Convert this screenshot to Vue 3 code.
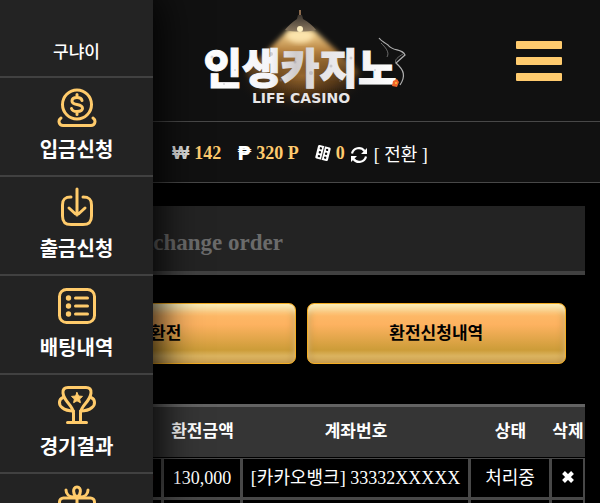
<script setup>
const columns = ['신청일시', '환전금액', '계좌번호', '상태', '삭제']

const orders = [
  { date: '2023-01-10 10:20', amount: '130,000', account: '[카카오뱅크] 33332XXXXX', state: '처리중' },
  { date: '2023-01-09 18:40', amount: '130,000', account: '[카카오뱅크] 33332XXXXX', state: '처리중' },
]

const menu = [
  { icon: 'deposit', label: '입금신청' },
  { icon: 'withdraw', label: '출금신청' },
  { icon: 'list', label: '배팅내역' },
  { icon: 'trophy', label: '경기결과' },
  { icon: 'gift', label: '이벤트' },
]
</script>

<template>
  <div class="app">
    <header class="top">
      <a class="brand" href="#" aria-label="인생카지노">
        <svg width="220" height="121" viewBox="0 0 220 121">
          <defs>
            <radialGradient id="glow" cx="0.5" cy="0.5" r="0.5">
              <stop offset="0" stop-color="#c98a3c" stop-opacity="0.75" />
              <stop offset="0.5" stop-color="#7a4a18" stop-opacity="0.5" />
              <stop offset="1" stop-color="#111" stop-opacity="0" />
            </radialGradient>
            <linearGradient id="beam" x1="0" y1="0" x2="0" y2="1">
              <stop offset="0" stop-color="#ffe2a0" />
              <stop offset="0.3" stop-color="#c98f45" stop-opacity="0.9" />
              <stop offset="1" stop-color="#5a3512" stop-opacity="0" />
            </linearGradient>
            <linearGradient id="letters" x1="0" y1="0" x2="1" y2="0">
              <stop offset="0" stop-color="#ffffff" />
              <stop offset="0.35" stop-color="#f4f4f8" />
              <stop offset="0.48" stop-color="#cfcbcb" />
              <stop offset="0.62" stop-color="#e6e4e8" />
              <stop offset="1" stop-color="#ffffff" />
            </linearGradient>
            <linearGradient id="shade" x1="0" y1="0" x2="0" y2="1">
              <stop offset="0" stop-color="#3b352f" />
              <stop offset="1" stop-color="#8d7a60" />
            </linearGradient>
            <filter id="soft" x="-20%" y="-20%" width="140%" height="140%">
              <feGaussianBlur stdDeviation="2.5" />
            </filter>
            <filter id="haze"><feGaussianBlur stdDeviation="0.6" /></filter>
          </defs>
          <ellipse cx="112" cy="76" rx="68" ry="38" fill="url(#glow)" />
          <path d="M98 30H124L170 72L150 98H70L56 72Z" fill="url(#beam)" filter="url(#soft)" />
          <ellipse cx="110" cy="36" rx="13" ry="7" fill="#ffe9b4" opacity="0.85" filter="url(#soft)" />
          <path d="M110 10V16" stroke="#8b6a4c" stroke-width="2" />
          <path d="M108 15H112L113 19C119 22 123 26 126 30C116 32 104 32 95 30C98 26 102 22 107 19Z" fill="url(#shade)" />
          <circle cx="110" cy="29" r="3" fill="#fff0c0" />
          <text class="brand-name" x="110" y="84" text-anchor="middle" fill="url(#letters)" stroke="url(#letters)">인생카지노</text>
          <g fill="#8f8f9a" opacity="0.35">
            <circle cx="22" cy="57" r="1.5" /><circle cx="45" cy="70" r="1" /><circle cx="81" cy="54" r="2" />
            <circle cx="91" cy="80" r="1.5" /><circle cx="105" cy="62" r="1.5" /><circle cx="121" cy="73" r="2" />
            <circle cx="141" cy="66" r="1.5" /><circle cx="161" cy="58" r="1.5" /><circle cx="150" cy="81" r="1" />
            <circle cx="34" cy="84" r="1" /><circle cx="185" cy="70" r="1" />
          </g>
          <path d="M203 81L207 79L209 82L207 87L202 86Z" fill="#f0642a" />
          <circle cx="206" cy="83" r="1" fill="#ffc23c" />
          <g fill="none" stroke="#b0b0b0" filter="url(#haze)">
            <path d="M210 85C216 76 214 70 206 63L215 55C212 48 203 52 198 45C194 42 191 41 189 38" stroke-width="1.2" />
            <path d="M206 63C204 60 208 57 213 54M197 57C200 52 195 47 191 43" stroke-width="0.8" opacity="0.7" />
          </g>
          <text class="brand-sub" x="111" y="103" text-anchor="middle" fill="#e8e6e6">LIFE CASINO</text>
        </svg>
      </a>
      <button class="burger" type="button" aria-label="메뉴">
        <span></span><span></span><span></span>
      </button>
    </header>

    <section class="wallet">
      <div class="coin"><span class="won">₩</span><b>142</b></div>
      <div class="coin"><span class="peso">₱</span><b>320 P</b></div>
      <div class="coin last">
        <svg width="16" height="18" viewBox="0 0 16 18">
          <g transform="rotate(14 8 9)">
            <rect x="1.5" y="2" width="13" height="14" rx="1.5" fill="#fff" />
            <path d="M8 2V16" stroke="#111" stroke-width="0.8" />
            <g fill="#111">
              <circle cx="4.800" cy="5" r="1.2" /><circle cx="4.800" cy="9" r="1.2" /><circle cx="4.800" cy="13" r="1.2" />
              <circle cx="11.200" cy="5" r="1.2" /><circle cx="11.200" cy="9" r="1.2" /><circle cx="11.200" cy="13" r="1.2" />
            </g>
          </g>
        </svg>
        <b>0</b>
      </div>
      <button class="convert" type="button">
        <svg width="18" height="18" viewBox="0 0 18 18">
          <g fill="none" stroke="#fff" stroke-width="2.2">
            <path d="M2 7.5A7 7 0 0 1 14.5 5" />
            <path d="M16 10.5A7 7 0 0 1 3.5 13" />
          </g>
          <path d="M17 2V8H11ZM1 16V10H7Z" fill="#fff" />
        </svg>
        <span>[ 전환 ]</span>
      </button>
    </section>

    <main class="content">
      <h1 class="title"><span>환전신청</span><small>Exchange order</small></h1>

      <div class="tabs">
        <button type="button">환전</button>
        <button type="button">환전신청내역</button>
      </div>

      <table class="orders">
        <colgroup>
          <col class="c-date" /><col class="c-amount" /><col /><col class="c-state" /><col class="c-del" />
        </colgroup>
        <thead>
          <tr><th v-for="c in columns" :key="c">{{ c }}</th></tr>
        </thead>
        <tbody>
          <tr v-for="o in orders" :key="o.date">
            <td>{{ o.date }}</td>
            <td>{{ o.amount }}</td>
            <td>{{ o.account }}</td>
            <td>{{ o.state }}</td>
            <td>
              <button class="remove" type="button" aria-label="삭제">
                <svg width="14" height="14" viewBox="0 0 14 14">
                  <path d="M2.5 2.5L11.5 11.5M11.5 2.5L2.5 11.5" stroke="#fff" stroke-width="4" />
                </svg>
              </button>
            </td>
          </tr>
        </tbody>
      </table>
    </main>

    <nav class="drawer">
      <div class="user">구냐이</div>
      <a v-for="m in menu" :key="m.icon" class="item" href="#">
        <svg width="40" height="40" viewBox="0 0 40 40" fill="none" stroke="#ffcb6b" stroke-width="3" stroke-linecap="round" stroke-linejoin="round">
          <template v-if="m.icon === 'deposit'">
            <circle cx="20" cy="16.5" r="14.5" />
            <path d="M25 12.5C24.5 10 22.500 9.5 20 9.5C17 9.5 15 10.5 15 13C15 15.5 17 16 20 16.5C23 17 25.5 17.5 25.5 20.3C25.5 22.500 23.5 23.5 20 23.5C17 23.5 15 22.500 14.5 20.5M20 6.5V9.5M20 23.5V26.5" />
            <path d="M4 30C0.5 32.5 2 37.5 6 37.5H34C38 37.5 39.5 32.5 36 30" />
          </template>
          <template v-else-if="m.icon === 'withdraw'">
            <path d="M14 10C8 10 5.5 12 5.5 18V29C5.5 35 8 37.5 14 37.5H26C32 37.5 34.5 35 34.5 29V18C34.5 12 32 10 26 10" />
            <path d="M20 2V28M12 21L18 26.5Q20 28 22 26.5L28 21" />
          </template>
          <template v-else-if="m.icon === 'list'">
            <rect x="2.5" y="3.5" width="35" height="33" rx="7" />
            <path d="M18.500 12H30.500M18.500 20H30.500M18.500 28H30.500" />
            <g fill="#ffcb6b" stroke="none">
              <circle cx="11.5" cy="12" r="2.7" /><circle cx="11.5" cy="20" r="2.7" /><circle cx="11.5" cy="28" r="2.7" />
            </g>
          </template>
          <template v-else-if="m.icon === 'trophy'">
            <path d="M11 2.5H29Q34.5 2.5 34 8C33 17 24 20 23.5 28V37M6 8Q5.5 2.5 11 2.5M6 8C7 17 16 20 16.5 28V37M10.5 37.5H29.5" />
            <path d="M6 12.5C1.5 14 1.5 20 5 22.5C8 25 13 26 16.5 26M34 12.5C38.5 14 38.5 20 35 22.5C32 25 27 26 23.5 26" />
            <path d="M20 7.5L21.6 11L25.5 11.4L22.6 14L23.4 17.7L20 15.8L16.6 17.7L17.4 14L14.5 11.4L18.4 11Z" fill="#ffcb6b" stroke-width="1" />
          </template>
          <template v-else>
            <path d="M20 13C16 11 15 3 20 3C25 3 24 11 20 13M9 6C9 10 12 13 17 13M31 6C31 10 28 13 23 13" />
            <rect x="2.5" y="14" width="35" height="24" rx="4" />
            <path d="M20 14V38M3 24H37" />
          </template>
        </svg>
        <span>{{ m.label }}</span>
      </a>
    </nav>
  </div>
</template>

<style>
body {
  margin: 0;
  background: #000;
}
</style>

<style scoped>
.app {
  position: relative;
  height: 100vh;
  overflow: hidden;
  background: #000;
  color: #fff;
  font-family: "Liberation Serif", "Noto Sans CJK KR", serif;
  font-size: 18px;
  line-height: 26px;
}

button {
  margin: 0;
  padding: 0;
  border: 0;
  background: none;
  color: inherit;
  font: inherit;
  cursor: pointer;
}

a {
  color: inherit;
  text-decoration: none;
}

svg {
  display: block;
}

.top {
  display: grid;
  grid-template-columns: 1fr auto 1fr;
  align-items: center;
  background: #111;
  border-bottom: 1px solid #484848;
}

.brand {
  grid-column: 2;
}

.brand-name {
  font: 900 42px "Noto Sans CJK KR", sans-serif;
  stroke-width: 1px;
}

.brand-sub {
  font: 700 14px "DejaVu Sans", sans-serif;
}

.burger {
  display: grid;
  gap: 8px;
  justify-self: end;
  width: 46px;
  margin-right: 38px;
}

.burger span {
  height: 8px;
  border-radius: 1px;
  background: #ffcb6e;
}

.wallet {
  display: flex;
  justify-content: center;
  align-items: center;
  height: 61px;
  padding-top: 2px;
  box-sizing: border-box;
  background: #111;
  border-bottom: 1px solid #484848;
}

.coin {
  display: flex;
  align-items: center;
  gap: 5px;
  margin-right: 16px;
}

.coin.last {
  margin-right: 5px;
}

.coin b {
  color: #ffcb6e;
}

.won {
  color: #ddd;
  font: 700 18px/26px "Liberation Sans", sans-serif;
}

.peso {
  font: 700 20px/26px "DejaVu Sans", sans-serif;
}

.convert {
  display: flex;
  align-items: center;
  gap: 6px;
  padding-top: 4px;
}

.content {
  padding: 23px 15px;
}

.title {
  display: flex;
  align-items: center;
  gap: 8px;
  height: 69px;
  margin: 0;
  padding: 8px 15px 0;
  box-sizing: border-box;
  background: #232323;
  border-bottom: 4px solid #414141;
  font-size: 24px;
}

.title small {
  color: #6b6b6b;
  font-size: 23px;
}

.tabs {
  display: grid;
  grid-template-columns: 1fr 1fr;
  gap: 11px;
  margin: 28px 19px 40px 21px;
}

.tabs button {
  height: 61px;
  border: 1px solid #f5ad22;
  border-radius: 7px;
  background: linear-gradient(#fbd08a 0, #fdb866 20%, #fdb260 35%, #cc9c38 78%, #dcb561 88%, #dcb362 100%);
  box-shadow: inset 0 7px 7px -2px #fff3c0, inset 0 0 8px #b08238;
  color: #000;
  font-size: 17px;
  font-weight: 700;
}

.orders {
  width: 100%;
  table-layout: fixed;
  border-collapse: separate;
  border-spacing: 0;
}

.c-date {
  width: 148px;
}

.c-amount {
  width: 79px;
}

.c-state {
  width: 81px;
}

.c-del {
  width: 34px;
}

th {
  height: 50px;
  padding: 0;
  background: #353535;
  border-top: 3px solid #636363;
  border-bottom: 1px solid #000;
  font-size: 17px;
  font-weight: 700;
  white-space: nowrap;
}

td {
  height: 38px;
  padding: 0;
  border: 1px solid #484848;
  border-right-width: 2px;
  border-bottom-width: 2px;
  text-align: center;
  white-space: nowrap;
}

.remove svg {
  margin-top: 4px;
}

.drawer {
  position: absolute;
  top: 0;
  bottom: 0;
  left: 0;
  width: 153px;
  overflow: hidden;
  background: #232323;
  box-shadow: 0 0 40px 4px #000;
}

.user {
  padding: 40px 0 10px;
  border-bottom: 2px solid #414141;
  font-size: 17px;
  font-weight: 500;
  text-align: center;
}

.item {
  display: flex;
  flex-direction: column;
  align-items: center;
  gap: 6px;
  padding: 10px 0 9px;
  border-bottom: 2px solid #414141;
  font-size: 20px;
  font-weight: 700;
  line-height: 32px;
}
</style>
